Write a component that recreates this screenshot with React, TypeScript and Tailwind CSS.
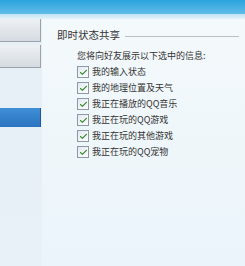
import { Check } from 'lucide-react';

const items = [
  '我的输入状态',
  '我的地理位置及天气',
  '我正在播放的QQ音乐',
  '我正在玩的QQ游戏',
  '我正在玩的其他游戏',
  '我正在玩的QQ宠物',
];

function Checkbox() {
  return (
    <span className="w-[12px] h-[12px] border border-[#8a9aa8] bg-gradient-to-br from-[#e4e9ee] to-[#ffffff] flex items-center justify-center shrink-0">
      <Check size={9} strokeWidth={3} className="text-[#3f8f3a]" />
    </span>
  );
}

export default function App() {
  return (
    <div
      className="w-[245px] h-[266px] flex flex-col overflow-hidden bg-[#edf5f9] text-[#333]"
      style={{ fontFamily: '"Noto Sans CJK SC", "Liberation Sans", sans-serif' }}
    >
      {/* title bar */}
      <div className="h-[14px] shrink-0 bg-gradient-to-b from-[#27a3dd] to-[#5fbde8]" />
      <div className="h-[5px] shrink-0 bg-gradient-to-b from-[#bfe2f3] to-[#e6f3fa]" />

      <div className="flex flex-1 min-h-0">
        {/* left nav */}
        <div className="w-[42px] shrink-0 bg-gradient-to-b from-[#e7eff6] to-[#e8f1f8] flex flex-col">
          <div className="h-[23px] w-[41px] bg-gradient-to-b from-[#eef1f4] to-[#d5dbe1] border-r border-b border-[#9aa3ab]" />
          <div className="h-[23px] w-[41px] mt-[3px] bg-gradient-to-b from-[#eef1f4] to-[#d5dbe1] border-r border-b border-[#9aa3ab]" />
          <div className="h-[19px] w-[41px] mt-[40px] bg-gradient-to-b from-[#3f8fd6] to-[#2c74c0] border-r border-[#1f5b9c]" />
        </div>

        {/* right panel */}
        <div className="flex-1 bg-gradient-to-b from-[#f4f9fb] to-[#eaf4fa] pl-[15px] pt-[9px]">
          <div className="flex items-center gap-[5px]">
            <span className="text-[10.5px] leading-[14px] whitespace-nowrap">即时状态共享</span>
            <span className="flex-1 h-px bg-[#b9c2c9] mr-[6px] mt-[2px]" />
          </div>
          <div className="pl-[20px] mt-[8px] text-[9px] leading-[12px] whitespace-nowrap">
            您将向好友展示以下选中的信息:
          </div>
          <div className="pl-[20px] mt-[4px] flex flex-col gap-[4px]">
            {items.map((t) => (
              <div key={t} className="flex items-center gap-[3px] h-[12px]">
                <Checkbox />
                <span className="text-[9px] leading-[12px] whitespace-nowrap">{t}</span>
              </div>
            ))}
          </div>
        </div>
      </div>
    </div>
  );
}
